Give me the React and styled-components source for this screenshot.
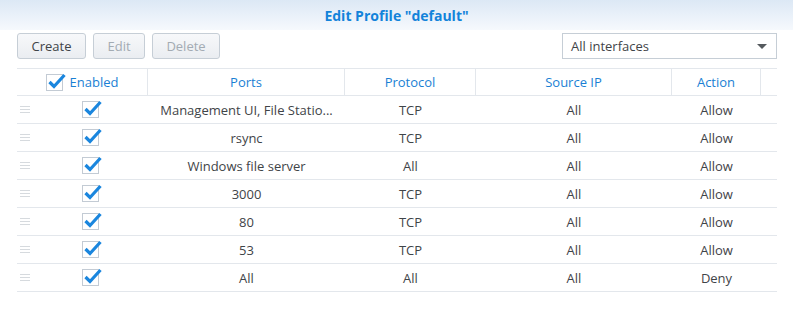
import React from 'react';
import styled, { createGlobalStyle } from 'styled-components';

const GlobalStyle = createGlobalStyle`
  html, body {
    margin: 0;
    background: #ffffff;
    font-family: "Open Sans", "Noto Sans", sans-serif;
    font-size: 13px;
    color: #3f4448;
  }
`;

const Window = styled.div`
  width: 793px;
  height: 328px;
  background: #fff;
`;

const TitleBar = styled.div`
  height: 30px;
  display: flex;
  align-items: center;
  justify-content: center;
  background: linear-gradient(to bottom, #dce8f5 0%, #f6f9fd 100%);
  color: #1283da;
  font-weight: 700;
  font-size: 14px;
`;

const Body = styled.div`
  padding: 3px 16px 0 17px;
`;

const Toolbar = styled.div`
  display: flex;
  align-items: center;
  height: 26px;
  gap: 7px;
`;

const Button = styled.button`
  width: ${p => p.$w}px;
  height: 26px;
  padding: 0;
  border: 1px solid #c6ced6;
  border-radius: 3px;
  background: linear-gradient(to bottom, #f7f8fa, #eaedf1);
  font: inherit;
  color: ${p => (p.disabled ? '#a3abb3' : '#3f4448')};
`;

const Spacer = styled.div`
  flex: 1;
`;

const Select = styled.div`
  width: 215px;
  height: 26px;
  box-sizing: border-box;
  border: 1px solid #c6ced6;
  display: flex;
  align-items: center;
  justify-content: space-between;
  padding: 0 9px 0 8px;
  color: #3f4448;
`;

const Caret = styled.span`
  width: 0;
  height: 0;
  border-left: 5px solid transparent;
  border-right: 5px solid transparent;
  border-top: 5px solid #555a5e;
`;

const Table = styled.div`
  margin-top: 9px;
  width: 760px;
`;

const cols = '131px 197px 131px 196px 89px 16px';

const HeadRow = styled.div`
  display: grid;
  grid-template-columns: ${cols};
  height: 26px;
  border-top: 1px solid #e3e7ec;
  border-bottom: 1px solid #e3e7ec;
`;

const HeadCell = styled.div`
  display: flex;
  align-items: center;
  justify-content: center;
  gap: 7px;
  color: #1a7fd4;
  border-right: ${p => (p.$last ? 'none' : '1px solid #e3e7ec')};
`;

const Row = styled.div`
  display: grid;
  grid-template-columns: ${cols};
  height: 27px;
  border-bottom: 1px solid #e3e7ec;
`;

const Cell = styled.div`
  position: relative;
  display: flex;
  align-items: center;
  justify-content: center;
  white-space: nowrap;
`;

const Handle = styled.span`
  position: absolute;
  left: 3px;
  top: 10px;
  width: 10px;
  height: 7px;
  border-top: 1px solid #d6dade;
  border-bottom: 1px solid #d6dade;
  box-sizing: border-box;
  &::after {
    content: '';
    position: absolute;
    left: 0;
    right: 0;
    top: 2px;
    border-top: 1px solid #d6dade;
  }
`;

const Box = styled.span`
  position: relative;
  display: inline-block;
  flex: none;
  width: 17px;
  height: 17px;
  box-sizing: border-box;
  border: 1px solid #c3cbd4;
  background: #fff;
  margin-left: ${p => p.$shift || 0}px;
  svg {
    position: absolute;
    left: 1px;
    top: -2px;
  }
`;

const Check = ({ shift }) => (
  <Box $shift={shift}>
    <svg width="18" height="16" viewBox="0 0 18 16">
      <path d="M1.5 9 L6 13.5 L16.5 2" fill="none" stroke="#1a86de" strokeWidth="3.2" strokeLinejoin="miter" />
    </svg>
  </Box>
);

const rows = [
  ['Management UI, File Statio...', 'TCP', 'All', 'Allow'],
  ['rsync', 'TCP', 'All', 'Allow'],
  ['Windows file server', 'All', 'All', 'Allow'],
  ['3000', 'TCP', 'All', 'Allow'],
  ['80', 'TCP', 'All', 'Allow'],
  ['53', 'TCP', 'All', 'Allow'],
  ['All', 'All', 'All', 'Deny'],
];

export default function App() {
  return (
    <Window>
      <GlobalStyle />
      <TitleBar>Edit Profile "default"</TitleBar>
      <Body>
        <Toolbar>
          <Button $w={69}>Create</Button>
          <Button disabled $w={52}>Edit</Button>
          <Button disabled $w={68}>Delete</Button>
          <Spacer />
          <Select>
            All interfaces
            <Caret />
          </Select>
        </Toolbar>
        <Table>
          <HeadRow>
            <HeadCell><Check /> Enabled</HeadCell>
            <HeadCell>Ports</HeadCell>
            <HeadCell>Protocol</HeadCell>
            <HeadCell>Source IP</HeadCell>
            <HeadCell>Action</HeadCell>
            <HeadCell $last />
          </HeadRow>
          {rows.map(r => (
            <Row key={r[0]}>
              <Cell>
                <Handle />
                <Check shift={16} />
              </Cell>
              <Cell>{r[0]}</Cell>
              <Cell>{r[1]}</Cell>
              <Cell>{r[2]}</Cell>
              <Cell>{r[3]}</Cell>
              <Cell />
            </Row>
          ))}
        </Table>
      </Body>
    </Window>
  );
}
